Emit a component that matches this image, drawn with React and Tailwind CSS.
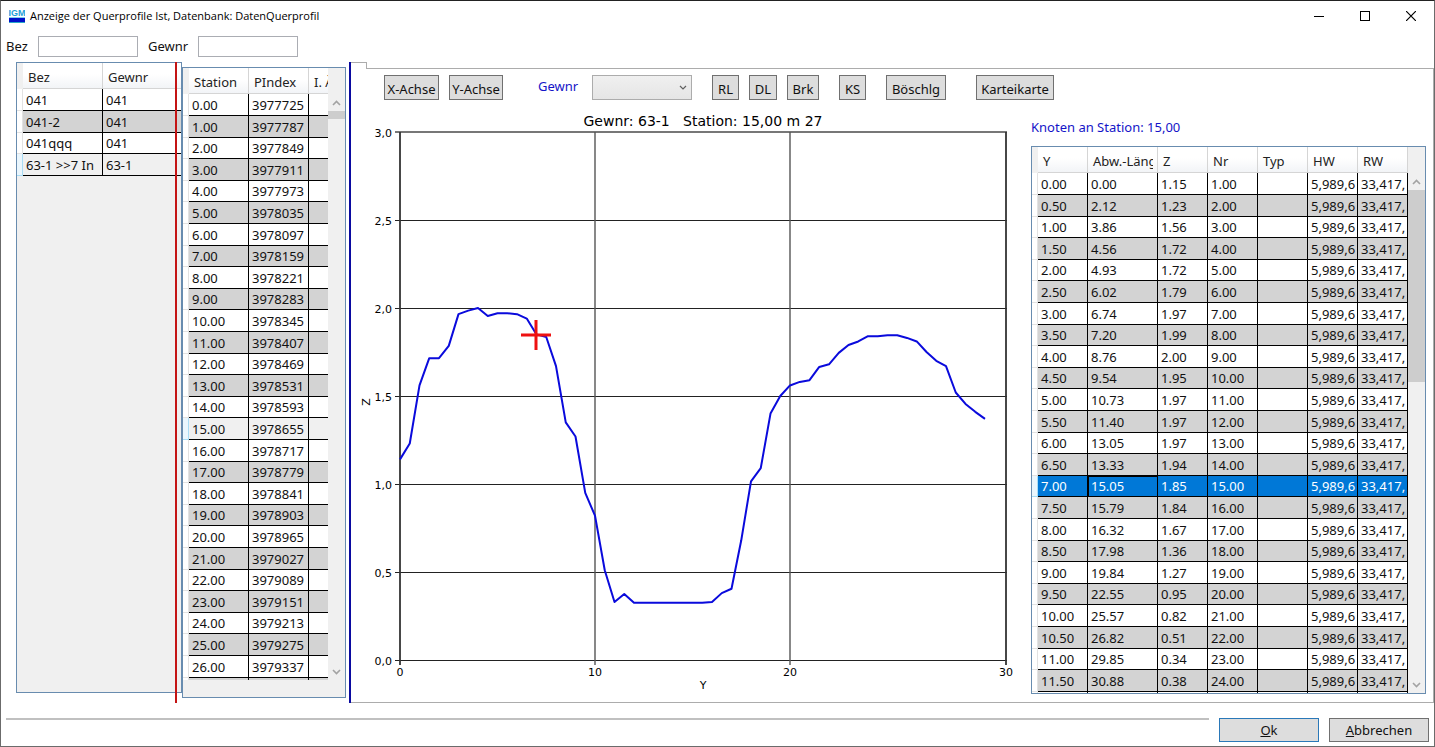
import React from 'react'
import clsx from 'clsx'

const gewaesser = [
  ['041', '041'],
  ['041-2', '041'],
  ['041qqq', '041'],
  ['63-1 >>7 In', '63-1'],
]

// PIndex goes up by 62 per station
const stationen = Array.from({ length: 28 }, (_, i) => [i.toFixed(2), String(3977725 + i * 62), ''])

const abwLaenge = [
  '0.00', '2.12', '3.86', '4.56', '4.93', '6.02', '6.74', '7.20', '8.76', '9.54', '10.73', '11.40', '13.05',
  '13.33', '15.05', '15.79', '16.32', '17.98', '19.84', '22.55', '25.57', '26.82', '29.85', '30.88', '32.05',
]
const zWerte = [
  '1.15', '1.23', '1.56', '1.72', '1.72', '1.79', '1.97', '1.99', '2.00', '1.95', '1.97', '1.97', '1.97',
  '1.94', '1.85', '1.84', '1.67', '1.36', '1.27', '0.95', '0.82', '0.51', '0.34', '0.38', '0.33',
]
const knoten = abwLaenge.map((l, i) => [
  (i / 2).toFixed(2), l, zWerte[i], (i + 1).toFixed(2), '', '5,989,6', '33,417,',
])

// z every 0.5 m
const profil = [
  1.14, 1.23, 1.56, 1.715, 1.715, 1.785, 1.965, 1.985, 2.0, 1.955, 1.97, 1.97, 1.965, 1.94, 1.85, 1.835, 1.67,
  1.35, 1.27, 0.95, 0.82, 0.51, 0.33, 0.375, 0.325, 0.325, 0.325, 0.325, 0.325, 0.325, 0.325, 0.325, 0.33, 0.38,
  0.405, 0.68, 1.015, 1.09, 1.4, 1.5, 1.56, 1.58, 1.59, 1.665, 1.68, 1.745, 1.79, 1.81, 1.84, 1.84, 1.845,
  1.845, 1.83, 1.81, 1.75, 1.7, 1.67, 1.52, 1.455, 1.41, 1.37,
]

const DataGrid = ({ heads, rows, cols, active, selected, current, label }) => (
  <table aria-label={label} className="w-full table-fixed border-separate border-spacing-0 text-[13px] leading-5">
    <colgroup>
      <col className="w-[6px]" />
      {cols.map((c, i) => <col key={i} className={c} />)}
    </colgroup>
    <thead>
      <tr className="h-[26px]">
        <th className="bg-[#f0f0f0] p-0" />
        {heads.map((h) => (
          <th
            key={h}
            className="overflow-hidden whitespace-nowrap border-b border-r border-[#d5d5d5] bg-linear-to-b from-white from-45% to-[#f2f4f7] p-0 px-1 pt-0.5 text-left font-normal text-[#222]"
          >
            <div className="overflow-hidden pl-px">{h}</div>
          </th>
        ))}
      </tr>
    </thead>
    <tbody>
      {rows.map((row, r) => (
        <tr
          key={r}
          className={clsx(
            'h-[22px] nth-[5n+3]:h-[21px] nth-[5n+5]:h-[21px]',
            r === selected ? 'bg-[#0078d7] text-white' : r === active ? 'bg-[#f0f0f0]' : r % 2 ? 'bg-[#d3d3d3]' : 'bg-white'
          )}
        >
          <td
            className={clsx(
              'border-b border-r p-0',
              r === active ? 'border-[#a8dcf5] bg-[#eaf6fd]' : 'border-[#e2e2e2] bg-white'
            )}
          />
          {row.map((v, c) => (
            <td
              key={c}
              className={clsx(
                'h-[21px] overflow-hidden whitespace-nowrap border-b border-r border-black p-0 pt-px pl-[3px] leading-[19px]',
                r === selected && c === current && 'outline outline-black -outline-offset-1'
              )}
            >
              {v}
            </td>
          ))}
        </tr>
      ))}
    </tbody>
  </table>
)

const Arrow = ({ up }) => (
  <svg width="9" height="6" viewBox="0 0 9 6" fill="none" stroke="#a3a3a3" strokeWidth="1.6">
    <path d={up ? 'M1 5 L4.5 1.5 L8 5' : 'M1 1 L4.5 4.5 L8 1'} />
  </svg>
)

const ScrollBar = ({ thumb }) => (
  <div className="flex w-[17px] shrink-0 flex-col items-center bg-[#f0f0f0] pt-[26px]">
    <div className="flex h-[17px] shrink-0 items-center"><Arrow up /></div>
    <div className={clsx('w-full bg-[#cdcdcd]', thumb)} />
    <div className="mt-auto flex h-[17px] shrink-0 items-center"><Arrow /></div>
  </div>
)

const ToolButton = ({ children, className }) => (
  <button className={clsx('h-[25px] shrink-0 border border-[#707070] bg-[#dddddd] pt-0.5 text-center leading-[18px] whitespace-nowrap', className)}>
    {children}
  </button>
)

const X0 = 49
const Y0 = 552
const px = (y) => X0 + y * 19.5
const pz = (z) => Y0 - z * 176

const Diagramm = () => (
  <svg viewBox="0 0 680 594" className="min-h-0 w-full flex-1" preserveAspectRatio="xMinYMin meet" fontFamily="'DejaVu Sans', sans-serif" fontSize="11">
    <text x="352" y="18" textAnchor="middle" fontSize="14" className="whitespace-pre">
      {'Gewnr: 63-1   Station: 15,00 m 27'}
    </text>
    {[0, 0.5, 1, 1.5, 2, 2.5, 3].map((z) => (
      <g key={z}>
        <line
          x1={X0 - 5}
          x2={X0 + 607}
          y1={z === 3 ? pz(z) : pz(z) + 0.5}
          y2={z === 3 ? pz(z) : pz(z) + 0.5}
          stroke={z === 3 ? '#777' : '#222'}
          strokeWidth={z === 3 ? 2 : 1.2}
        />
        <text x="41" y={pz(z) + 5} textAnchor="end">{z.toFixed(1).replace('.', ',')}</text>
      </g>
    ))}
    {[[0, X0], [10, X0 + 195], [20, X0 + 390], [30, X0 + 606]].map(([t, x]) => (
      <g key={t}>
        <line x1={x} x2={x} y1="24" y2={Y0 + 5} stroke={t % 30 ? '#555' : '#333'} strokeWidth={t % 30 ? 1.4 : 1.8} />
        <text x={x} y="568" textAnchor="middle">{t}</text>
      </g>
    ))}
    <text x="352" y="581" textAnchor="middle">Y</text>
    <text x="0" y="0" textAnchor="middle" transform="translate(19 294) rotate(-90)">Z</text>
    <polyline
      points={profil.map((z, i) => `${px(i / 2)},${pz(z)}`).join(' ')}
      fill="none"
      stroke="#0a0adc"
      strokeWidth="2"
      strokeLinejoin="round"
    />
    <path d="M170 227 H200 M185 212 V242" stroke="#ee1111" strokeWidth="3" />
  </svg>
)

const App = () => {
  return (
    <div className="flex h-screen flex-col overflow-hidden border border-[#6b6b6b] border-t-[#222] bg-white font-['Noto_Sans',sans-serif] text-[13px] leading-5 text-[#111]">
      <header className="flex h-[29px] shrink-0 items-center pl-2">
        <svg width="16" height="16" viewBox="0 0 16 16" className="mr-[5px]">
          <text x="8" y="8" textAnchor="middle" fontSize="9" fontWeight="bold" fill="#1e9fd8" fontFamily="'Liberation Sans', sans-serif">IGM</text>
          <rect y="10" width="16" height="4" fill="#0010c8" />
          <rect y="14" width="16" height="1" fill="#2aa9c9" />
          <rect y="9" width="16" height="1" fill="#7fd0ee" />
        </svg>
        <h1 className="font-['Open_Sans',sans-serif] text-[11px] text-black">Anzeige der Querprofile Ist, Datenbank: DatenQuerprofil</h1>
        <div className="ml-auto flex">
          <button aria-label="Minimieren" className="flex h-[29px] w-[46px] items-center justify-center">
            <svg width="10" height="10"><path d="M0 5.5H10" stroke="#000" /></svg>
          </button>
          <button aria-label="Maximieren" className="flex h-[29px] w-[46px] items-center justify-center">
            <svg width="10" height="10"><rect x=".5" y=".5" width="9" height="9" fill="none" stroke="#000" /></svg>
          </button>
          <button aria-label="Schließen" className="flex h-[29px] w-[46px] items-center justify-center">
            <svg width="10" height="10"><path d="M0 0L10 10M10 0L0 10" stroke="#000" strokeWidth="1.2" /></svg>
          </button>
        </div>
      </header>

      <div className="flex h-8 shrink-0 items-center pl-[5px]">
        <label htmlFor="bez" className="w-8">Bez</label>
        <input id="bez" className="h-[21px] w-[100px] border border-[#abadb3] px-1" />
        <label htmlFor="gewnr" className="ml-[10px] w-[50px]">Gewnr</label>
        <input id="gewnr" className="h-[21px] w-[100px] border border-[#abadb3] px-1" />
      </div>

      <main className="flex min-h-0 flex-1 pl-[15px]">
        <section className="relative w-[166px] shrink-0 pb-[10px]">
          <div className="h-full overflow-hidden border border-[#688caf] bg-[#f0f0f0]">
            <DataGrid label="Gewässer" heads={['Bez', 'Gewnr']} cols={['w-[80px]', 'w-[80px]']} rows={gewaesser} active={3} />
          </div>
          <div className="absolute inset-y-0 right-[5px] w-0.5 bg-[#c41414]" />
        </section>

        <section className="w-[164px] shrink-0 pt-[5px] pb-[5px]">
          <div className="flex h-full flex-col border border-[#688caf] bg-[#f0f0f0]">
            <div className="flex min-h-0 flex-1">
              <div className="min-w-0 flex-1 overflow-hidden">
                <DataGrid label="Stationen" heads={['Station', 'PIndex', 'I. Ä']} cols={['w-[60px]', 'w-[60px]', 'w-[60px]']} rows={stationen} active={15} />
              </div>
              <ScrollBar thumb="h-2" />
            </div>
            <div className="h-[17px] shrink-0" />
          </div>
        </section>

        <div className="ml-[3px] w-0.5 shrink-0 bg-[#0a0aa0]" />

        <section className="flex min-w-0 flex-1 flex-col">
          <div className="flex h-[7px] shrink-0">
            <div className="w-4 border-t border-r border-[#acacac]" />
            <div className="flex-1 border-b border-[#acacac]" />
          </div>
          <div className="flex min-h-0 flex-1 border-r border-b border-[#acacac]">
            <div className="flex min-w-0 flex-1 flex-col">
              <div className="flex h-[39px] shrink-0 items-start pt-[6px] pl-[33px]">
                <ToolButton className="w-[55px]">X-Achse</ToolButton>
                <ToolButton className="ml-[10px] w-[54px]">Y-Achse</ToolButton>
                <label htmlFor="auswahl" className="ml-[35px] w-[54px] shrink-0 pt-px text-[#1414c8]">Gewnr</label>
                <div className="relative shrink-0">
                  <select id="auswahl" className="block h-[25px] w-[100px] appearance-none border border-[#acacac] bg-linear-to-b from-[#f0f0f0] to-[#e5e5e5]" />
                  <svg width="8" height="5" className="pointer-events-none absolute top-[10px] right-[5px]" fill="none" stroke="#606060" strokeWidth="1.2">
                    <path d="M1 1L4 4L7 1" />
                  </svg>
                </div>
                <ToolButton className="ml-5 w-[27px]">RL</ToolButton>
                <ToolButton className="ml-[10px] w-7">DL</ToolButton>
                <ToolButton className="ml-[10px] w-8">Brk</ToolButton>
                <ToolButton className="ml-5 w-[27px]">KS</ToolButton>
                <ToolButton className="ml-5 w-[60px]">Böschlg</ToolButton>
                <ToolButton className="ml-[30px] w-[78px]">Karteikarte</ToolButton>
              </div>
              <Diagramm />
            </div>
            <div className="mr-[7px] flex w-[395px] shrink-0 flex-col pt-12 pb-2">
              <h2 className="mb-[9px] text-[#1414c8]">Knoten an Station: 15,00</h2>
              <div className="flex min-h-0 flex-1 border border-[#688caf]">
                <div className="min-w-0 flex-1 overflow-hidden">
                  <DataGrid
                    label="Knoten"
                    heads={['Y', 'Abw.-Länge', 'Z', 'Nr', 'Typ', 'HW', 'RW']}
                    cols={['w-[50px]', 'w-[70px]', 'w-[50px]', 'w-[50px]', 'w-[50px]', 'w-[50px]', 'w-[50px]']}
                    rows={knoten}
                    active={14}
                    selected={14}
                    current={1}
                  />
                </div>
                <ScrollBar thumb="h-48" />
              </div>
            </div>
          </div>
        </section>
      </main>

      <footer className="flex shrink-0 items-start gap-[10px] pt-[15px] pr-[5px] pb-1 pl-[5px]">
        <hr className="flex-1 border-t-2 border-[#c0c0c0]" />
        <button className="h-6 w-[100px] border border-[#2a78b8] bg-[#dddddd]"><u>O</u>k</button>
        <button className="h-6 w-[100px] border border-[#707070] bg-[#dddddd]"><u>A</u>bbrechen</button>
      </footer>
    </div>
  )
}

export default App
